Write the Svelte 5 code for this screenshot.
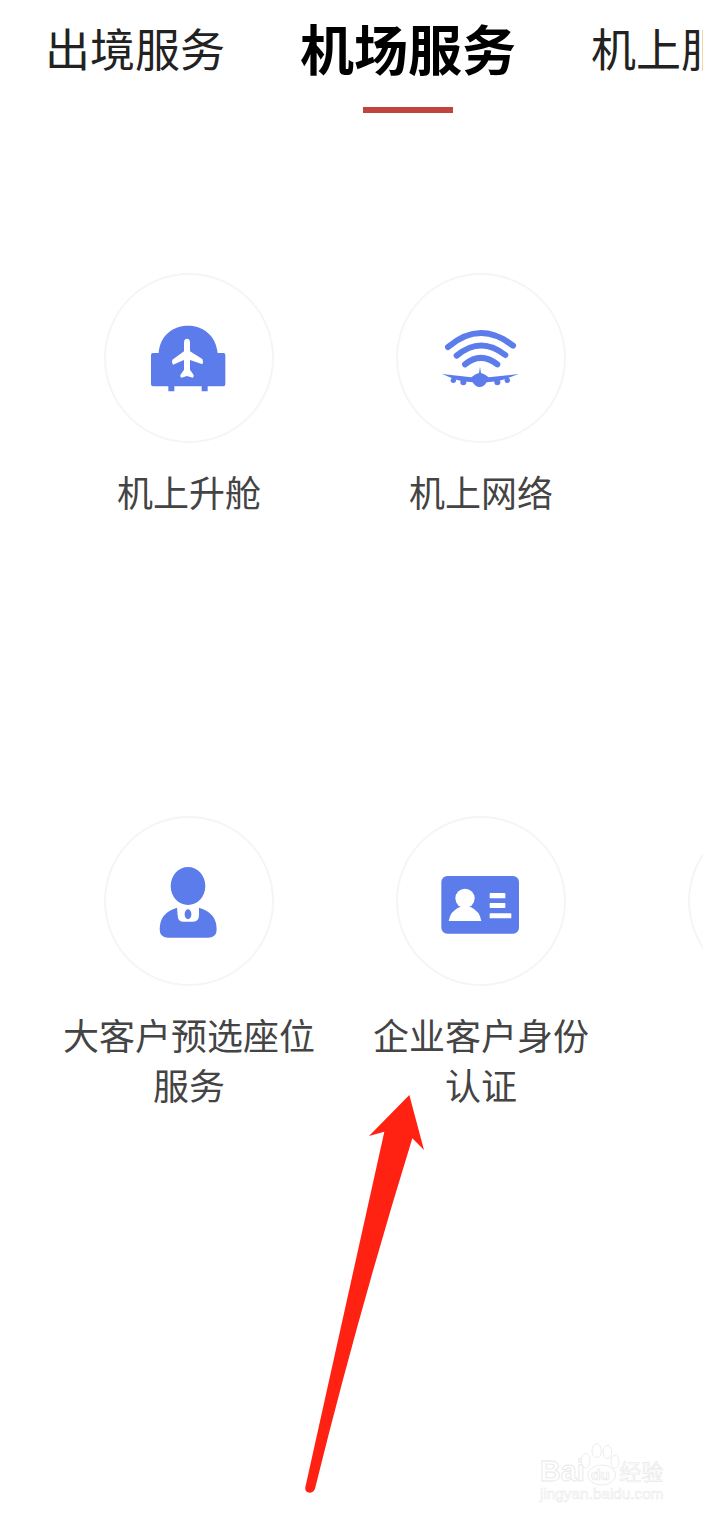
<script>
  const tabs = [
    { label: "出境服务" },
    { label: "机场服务", active: true },
    { label: "机上服务" },
  ];

  const services = [
    { icon: "upgrade", lines: ["机上升舱"] },
    { icon: "wifi", lines: ["机上网络"] },
    { icon: "none", lines: [] },
    { icon: "seat", lines: ["大客户预选座位", "服务"] },
    { icon: "card", lines: ["企业客户身份", "认证"] },
    { icon: "blank", lines: [] },
  ];
</script>

<div class="page">
  <nav class="tabs">
    {#each tabs as tab}
      <div class="tab" class:active={tab.active}>
        <span class="tab-label">{tab.label}</span>
        {#if tab.active}<span class="tab-line"></span>{/if}
      </div>
    {/each}
  </nav>

  <div class="grid">
    {#each services as item}
      <div class="item">
        {#if item.icon !== "none"}
          <div class="circle">
            <svg class="icon" viewBox="14 10 510 510" aria-hidden="true">
              {#if item.icon === "upgrade"}
                <path class="fill" d="M178 250 C182 200 218 168 266 168 C314 168 350 200 355 250 H372 Q378 250 378 256 V344 Q378 350 372 350 H325 V365 H307 V350 H225 V365 H207 V350 H161 Q155 350 155 344 V256 Q155 250 161 250 Z" />
                <path class="white" d="M263 207 Q272 207 272 219 V245 L309 268 Q313 276 309 284 L272 271 V300 L283 316 Q284 322 280 324 L263 319 L246 324 Q242 322 243 316 L254 300 V271 L221 285 Q215 278 219 270 L254 245 V219 Q254 207 263 207 Z" />
              {:else if item.icon === "wifi"}
                <path class="arc" d="M170 232 Q266 150 365 228" />
                <path class="arc" d="M196 258 Q268 198 342 256" />
                <path class="arc" d="M221 284 Q268 245 318 284" />
                <path class="fill" d="M152 313 L240 323 Q252 312 263 310 L266 291 L269 310 Q280 312 292 323 L382 313 L340 329 Q320 336 286 338 Q278 352 265 352 Q252 352 244 338 Q210 336 190 329 Z" />
                <circle class="fill" cx="186" cy="332" r="8" />
                <circle class="fill" cx="216" cy="338" r="9" />
                <circle class="fill" cx="318" cy="338" r="9" />
                <circle class="fill" cx="348" cy="332" r="8" />
              {:else if item.icon === "seat"}
                <ellipse class="fill" cx="266" cy="220" rx="52" ry="57" />
                <path class="fill" d="M233 285 Q181 300 181 350 Q181 375 205 375 H328 Q352 375 352 350 Q352 300 299 285 V308 Q299 327 281 327 H251 Q235 327 235 308 Z" />
                <ellipse class="fill" cx="266" cy="305" rx="10" ry="15" />
              {:else if item.icon === "card"}
                <rect class="fill" x="150" y="190" width="233" height="173" rx="18" />
                <circle class="white" cx="221" cy="257" r="29" />
                <path class="white" d="M172 325 Q176 296 205 283 H238 Q266 296 270 325 Z" />
                <rect class="white" x="295" y="241" width="47" height="16" rx="2" />
                <rect class="white" x="295" y="271" width="47" height="15" rx="2" />
                <rect class="white" x="295" y="302" width="65" height="15" rx="2" />
              {/if}
            </svg>
          </div>
          <div class="label">
            {#each item.lines as line}
              <div>{line}</div>
            {/each}
          </div>
        {/if}
      </div>
    {/each}
  </div>

  <svg class="arrow" viewBox="0 0 450 1260" aria-hidden="true">
    <path d="M358 45 L402 210 L367 175 Q205 700 75 1226 Q70 1238 59 1238 Q44 1236 46 1222 L283 155 L237 168 Z" />
  </svg>

  <svg class="mark" viewBox="0 0 549 297" aria-hidden="true">
    <text class="mark-big" x="60" y="182">Bai</text>
    <ellipse class="paw" cx="245" cy="165" rx="42" ry="30" />
    <ellipse class="paw" cx="197" cy="122" rx="13" ry="22" />
    <ellipse class="paw" cx="230" cy="92" rx="14" ry="21" />
    <ellipse class="paw" cx="262" cy="96" rx="13" ry="20" />
    <ellipse class="paw" cx="285" cy="125" rx="12" ry="20" />
    <text class="mark-du" x="213" y="180">du</text>
    <text class="mark-cn" x="298" y="180">经验</text>
    <text class="mark-url" x="60" y="236">jingyan.baidu.com</text>
  </svg>
</div>

<style>
  :global(body) {
    background: #fff;
  }

  .page {
    position: relative;
    width: 703px;
    height: 1519px;
    overflow: hidden;
    background: #fff;
    font-family: "Noto Sans CJK SC", "Liberation Sans", sans-serif;
  }

  .tabs {
    display: flex;
    gap: 75px;
    padding: 18px 0 0 45px;
    height: 95px;
    white-space: nowrap;
  }

  .tab {
    display: flex;
    flex-direction: column;
    align-items: center;
    flex: none;
  }

  .tab-label {
    font-size: 45px;
    line-height: 60px;
    color: #222;
  }

  .active .tab-label {
    font-size: 54px;
    font-weight: 700;
    color: #000;
  }

  .tab-line {
    width: 90px;
    height: 6px;
    margin-top: 29px;
    background: #c0433f;
  }

  .grid {
    display: grid;
    grid-template-columns: repeat(3, 292px);
    grid-auto-rows: 543px;
    padding: 160px 0 0 43px;
  }

  .item {
    display: flex;
    flex-direction: column;
    align-items: center;
  }

  .circle {
    width: 170px;
    height: 170px;
    flex: none;
    box-sizing: border-box;
    border: 2px solid #f5f5f5;
    border-radius: 50%;
    position: relative;
  }

  .icon {
    position: absolute;
    inset: -2px;
    width: 170px;
    height: 170px;
  }

  .fill {
    fill: #5b7cea;
  }

  .white {
    fill: #fff;
  }

  .arc {
    fill: none;
    stroke: #5b7cea;
    stroke-width: 18;
    stroke-linecap: round;
  }

  .label {
    margin-top: 23px;
    font-size: 36px;
    line-height: 50px;
    color: #444;
    text-align: center;
    white-space: nowrap;
  }

  .arrow {
    position: absolute;
    left: 290px;
    top: 1080px;
    width: 150px;
    height: 420px;
  }

  .arrow path {
    fill: #ff2213;
  }

  .mark {
    position: absolute;
    left: 520px;
    top: 1420px;
    width: 183px;
    height: 99px;
  }

  .mark text {
    fill: #fff;
    stroke: #e8e8e8;
    font-family: "Liberation Sans", sans-serif;
  }

  .mark-big {
    font-size: 86px;
    font-weight: 700;
    stroke-width: 2.5;
  }

  .mark-du {
    font-size: 46px;
    font-weight: 700;
    stroke-width: 2;
  }

  .mark .mark-cn {
    font-family: "Noto Sans CJK SC", sans-serif;
    font-size: 66px;
    stroke-width: 2;
  }

  .mark-url {
    font-size: 46px;
    stroke-width: 1.5;
  }

  .paw {
    fill: #fff;
    stroke: #e8e8e8;
    stroke-width: 2.5;
  }
</style>
